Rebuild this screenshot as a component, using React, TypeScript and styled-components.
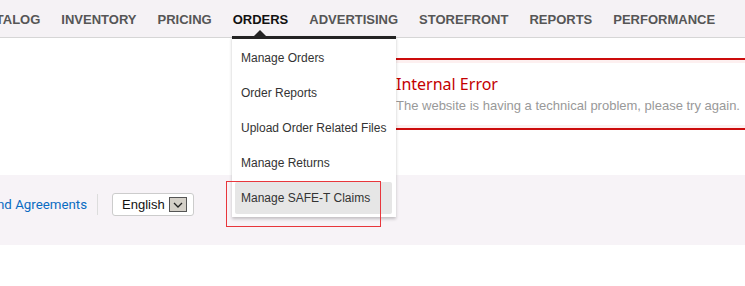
import styled, { createGlobalStyle } from "styled-components";

const GlobalStyle = createGlobalStyle`
  html, body {
    margin: 0;
    padding: 0;
    background: #ffffff;
  }
  body {
    font-family: "Liberation Sans", Arial, sans-serif;
    overflow: hidden;
  }
`;

const Page = styled.div`
  position: relative;
  width: 745px;
  height: 286px;
  overflow: hidden;
`;

const NavBar = styled.nav`
  display: flex;
  align-items: center;
  gap: 21px;
  height: 38px;
  margin-left: -22px;
  padding-top: 1px;
  box-sizing: border-box;
  background: #f5f2f5;
  border-bottom: 1px solid #d6d6d6;
  width: 767px;
`;

const NavItem = styled.span<{ $active?: boolean }>`
  font-family: "Liberation Sans", Arial, sans-serif;
  font-weight: bold;
  font-size: 13px;
  white-space: nowrap;
  color: ${(p) => (p.$active ? "#111111" : "#565656")};
`;

const Main = styled.main`
  height: 137px;
  padding-top: 20px;
  box-sizing: border-box;
`;

const ErrorBox = styled.section`
  margin-left: 396px;
  height: 72px;
  border-top: 2px solid #cc0c0c;
  border-bottom: 2px solid #cc0c0c;
  box-shadow: inset 0 3px 0 #fdf0f0, inset 0 -3px 0 #fdf0f0;
  padding-top: 13px;
  box-sizing: border-box;
`;

const ErrorTitle = styled.h2`
  margin: 0;
  font-family: "Noto Sans", "Open Sans", sans-serif;
  font-weight: normal;
  font-size: 16px;
  line-height: 22px;
  color: #c40000;
`;

const ErrorText = styled.p`
  margin: 2px 0 0;
  font-family: "Liberation Sans", Arial, sans-serif;
  font-size: 13px;
  line-height: 18px;
  color: #999999;
  white-space: nowrap;
`;

const FooterBand = styled.footer`
  height: 70px;
  background: #f7f3f7;
  display: flex;
  align-items: flex-start;
  padding-top: 18px;
  box-sizing: border-box;
`;

const FooterLink = styled.a`
  font-family: Roboto, "Noto Sans", sans-serif;
  font-size: 13.3px;
  color: #0a6bc2;
  text-decoration: none;
  white-space: nowrap;
  margin-left: -3px;
  padding-right: 10px;
  border-right: 1px solid #dddddd;
  line-height: 21px;
  margin-top: 1px;
`;

const LangSelect = styled.div`
  display: flex;
  align-items: center;
  justify-content: space-between;
  margin-left: 14px;
  width: 82px;
  height: 23px;
  box-sizing: border-box;
  padding: 0 6px 0 9px;
  background: #ffffff;
  border: 1px solid #cccccc;
  border-radius: 3px;
  font-family: "Liberation Sans", Arial, sans-serif;
  font-size: 13px;
  color: #111111;
`;

const SelectArrow = styled.span`
  display: flex;
  align-items: center;
  justify-content: center;
  width: 18px;
  height: 15px;
  box-sizing: border-box;
  background: #d4d0c8;
  border: 1px solid #555555;
`;

const Dropdown = styled.div`
  position: absolute;
  left: 232px;
  top: 36px;
  width: 164px;
  border-top: 3px solid #232323;
  background: #ffffff;
  box-shadow: 0 2px 3px rgba(0, 0, 0, 0.22);
  padding: 3px 4px 3px 3px;
  box-sizing: border-box;
  display: flex;
  flex-direction: column;
  gap: 3px;

  &::before {
    content: "";
    position: absolute;
    left: 22px;
    top: -9px;
    border-left: 6px solid transparent;
    border-right: 6px solid transparent;
    border-bottom: 6px solid #232323;
  }
`;

const MenuItem = styled.div<{ $hover?: boolean }>`
  height: 32px;
  display: flex;
  align-items: center;
  padding-left: 6px;
  border-radius: 2px;
  font-family: "Liberation Sans", Arial, sans-serif;
  font-size: 12px;
  color: #333333;
  white-space: nowrap;
  background: ${(p) => (p.$hover ? "#e6e6e6" : "transparent")};
`;

const Annotation = styled.div`
  position: absolute;
  left: 226px;
  top: 181px;
  width: 155px;
  height: 46px;
  box-sizing: border-box;
  border: 1.5px solid #e8363c;
`;

const navItems = [
  "CATALOG",
  "INVENTORY",
  "PRICING",
  "ORDERS",
  "ADVERTISING",
  "STOREFRONT",
  "REPORTS",
  "PERFORMANCE",
];

const menuItems = [
  "Manage Orders",
  "Order Reports",
  "Upload Order Related Files",
  "Manage Returns",
  "Manage SAFE-T Claims",
];

const App = () => {
  return (
    <>
      <GlobalStyle />
      <Page>
        <NavBar>
          {navItems.map((item) => (
            <NavItem key={item} $active={item === "ORDERS"}>
              {item}
            </NavItem>
          ))}
        </NavBar>
        <Main>
          <ErrorBox>
            <ErrorTitle>Internal Error</ErrorTitle>
            <ErrorText>
              The website is having a technical problem, please try again.
            </ErrorText>
          </ErrorBox>
        </Main>
        <FooterBand>
          <FooterLink href="#">nd Agreements</FooterLink>
          <LangSelect>
            English
            <SelectArrow>
              <svg width="10" height="6" viewBox="0 0 10 6">
                <path d="M1 1 L5 5 L9 1" fill="none" stroke="#222" strokeWidth="1.3" />
              </svg>
            </SelectArrow>
          </LangSelect>
        </FooterBand>
        <Dropdown>
          {menuItems.map((item, i) => (
            <MenuItem key={item} $hover={i === menuItems.length - 1}>
              {item}
            </MenuItem>
          ))}
        </Dropdown>
        <Annotation />
      </Page>
    </>
  );
};

export default App;
